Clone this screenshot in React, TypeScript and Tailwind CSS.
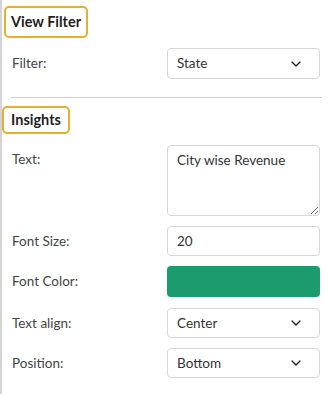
import { ChevronDown } from 'lucide-react';

const font = { fontFamily: 'Lato, "Noto Sans", sans-serif' };

function Select({ value }: { value: string }) {
  return (
    <div className="flex h-full items-center justify-between rounded-[4px] border border-[#d6d6d6] bg-white pl-[9px] pr-[15px] text-[13.5px] text-[#333]">
      <span>{value}</span>
      <ChevronDown className="h-[16px] w-[16px] text-[#222]" strokeWidth={2} />
    </div>
  );
}

function Row({ label, className, children }: { label: string; className: string; children: React.ReactNode }) {
  return (
    <div className={`grid grid-cols-[165px_153px] ${className}`}>
      <div className="flex items-center pl-[10px] text-[13.5px] text-[#444]">{label}</div>
      <div>{children}</div>
    </div>
  );
}

function SectionTitle({ title, className }: { title: string; className: string }) {
  return (
    <div className={`inline-flex items-center justify-center whitespace-nowrap rounded-[5px] border-2 border-[#e9ae2f] text-[14.5px] font-bold text-[#222] ${className}`}>
      {title}
    </div>
  );
}

export default function App() {
  return (
    <div className="h-[394px] w-[328px] border-l-2 border-[#d4d4d4] bg-white" style={font}>
      <div className="pt-[6px] pl-[2px]">
        <SectionTitle title="View Filter" className="h-[32px] w-[84px]" />
      </div>

      <Row label="Filter:" className="mt-[10px] h-[31px]">
        <Select value="State" />
      </Row>

      <div className="ml-[9px] mr-[6px] mt-[18px] h-px bg-[#cfcfcf]" />

      <div className="mt-[8px]">
        <SectionTitle title="Insights" className="h-[28px] w-[68px]" />
      </div>

      <div className="mt-[11px] grid grid-cols-[165px_153px]">
        <div className="pl-[10px] pt-[4px] text-[13.5px] text-[#444]">Text:</div>
        <textarea
          defaultValue="City wise Revenue"
          className="block h-[71px] w-[153px] rounded-[4px] border border-[#d6d6d6] px-[9px] py-[4px] text-[13.5px] text-[#333] outline-none"
        />
      </div>

      <Row label="Font Size:" className="mt-[10px] h-[30px]">
        <div className="flex h-full items-center rounded-[4px] border border-[#d6d6d6] pl-[9px] text-[13.5px] text-[#333]">20</div>
      </Row>

      <Row label="Font Color:" className="mt-[10px] h-[31px]">
        <div className="h-full rounded-[4px] bg-[#1b9b6e]" />
      </Row>

      <Row label="Text align:" className="mt-[11px] h-[30px]">
        <Select value="Center" />
      </Row>

      <Row label="Position:" className="mt-[10px] h-[30px]">
        <Select value="Bottom" />
      </Row>
    </div>
  );
}
